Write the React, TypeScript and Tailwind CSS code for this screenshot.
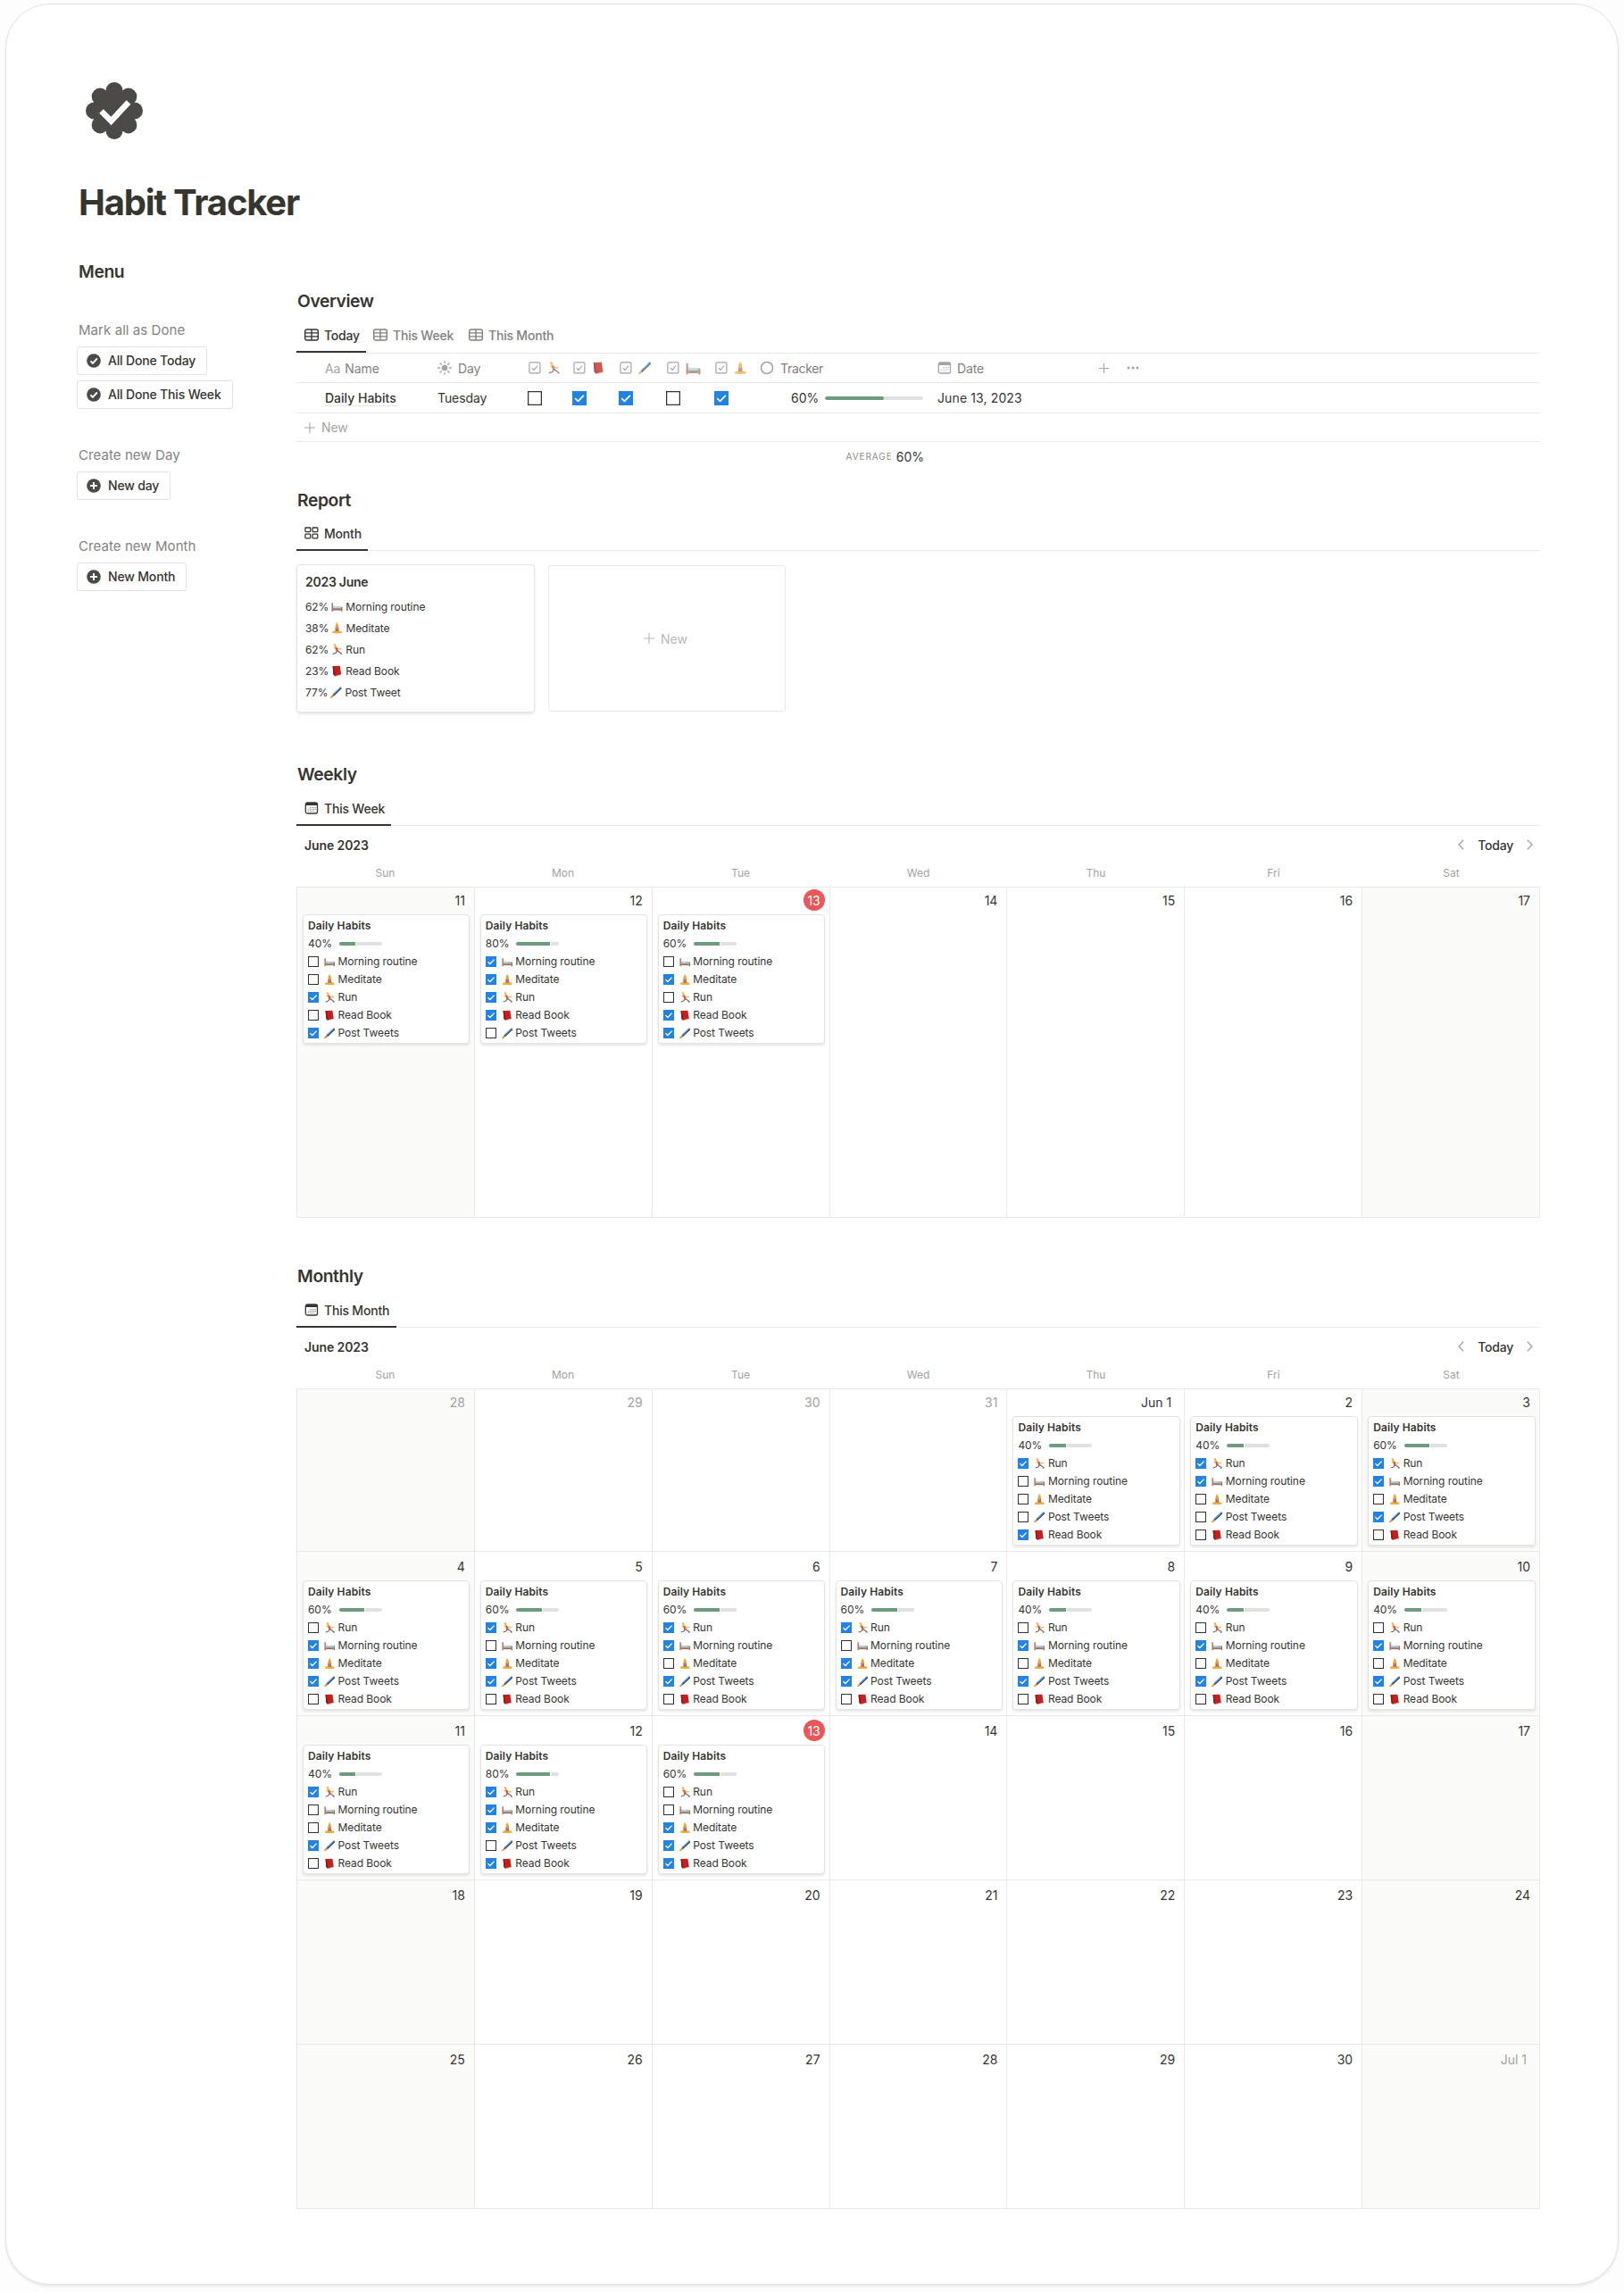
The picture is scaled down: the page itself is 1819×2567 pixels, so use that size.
import React from "react";

type Habit = "run" | "bed" | "yoga" | "pen" | "book";

const LABELS: Record<Habit, string> = {
  run: "Run",
  bed: "Morning routine",
  yoga: "Meditate",
  pen: "Post Tweets",
  book: "Read Book",
};

function HabitIcon({ kind, className }: { kind: Habit; className: string }) {
  return (
    <svg viewBox="0 0 16 16" className={className} fill="none">
      {kind === "run" && (
        <g strokeLinecap="round" strokeLinejoin="round">
          <path d="M8.800 9.800l2.400 1.600 2.800 2.400" stroke="#4d6f86" strokeWidth="1.500" />
          <path d="M7.600 10L6.600 12.600l-4 1.400" stroke="#7d6353" strokeWidth="1.400" />
          <path d="M6.800 6.400L3.800 5.600M9 6.600l2.800 1.200 1.800-1.400" stroke="#eeb14a" strokeWidth="1.400" />
          <path d="M6.900 6l1.300 3.600" stroke="#dd4f33" strokeWidth="2.800" />
          <path d="M4.800 1.400l1.200 2.400" stroke="#eeb14a" strokeWidth="2.600" />
          <path d="M13.200 14.800l1.600-.8" stroke="#d8703d" strokeWidth="1" />
        </g>
      )}
      {kind === "bed" && (
        <g>
          <path d="M2.400 8h11.200v4.400H2.400z" fill="#7f9ba6" />
          <path d="M2.400 7.200q2-1 3.800.4l7.400 1.200v1H2.400z" fill="#c9d3d3" />
          <path d="M2.400 11.800h11.400V13H2.400z" fill="#a5583d" />
          <path d="M.6 2.800h1.800v11.600H.6z" fill="#b5694a" />
          <path d="M13.600 8.200h1.800v6.200h-1.800z" fill="#b5694a" />
        </g>
      )}
      {kind === "yoga" && (
        <g>
          <path d="M1 14.600q-.3-2.400 3-2.700l4-.9 4 .9q3.300.3 3 2.700-2.600.8-7 .8t-7-.8z" fill="#eeb03c" />
          <path d="M6.800.6h2l1.800 7.800-1.300 3.200H6.500L5.200 8.400z" fill="#f0b84a" />
          <circle cx="8" cy="4.800" r="1.900" fill="#e6a23c" />
          <path d="M6 7.400q2-1.200 4 0l.6 5H5.400z" fill="#b86a66" />
          <path d="M7.200 7h1.600L8 9.800z" fill="#eeb14a" />
        </g>
      )}
      {kind === "pen" && (
        <g strokeLinecap="round">
          <path d="M1.300 14.900l3.400-4.200" stroke="#dd9038" strokeWidth="2.200" />
          <path d="M5.200 10.200L14 1.800" stroke="#3f83cf" strokeWidth="2.600" />
          <path d="M4.600 12.400L14.800 2.600" stroke="#3b444d" strokeWidth="1.400" />
          <path d="M5.800 8.800l6-6" stroke="#93c2ec" strokeWidth="1" />
        </g>
      )}
      {kind === "book" && (
        <g>
          <path d="M2 1.200L12 .8l1.800 12.400-8.400 2.200L3 12.800z" fill="#c4201f" />
          <path d="M2 1.200l1.800.6 1.900 13.400L3 12.800z" fill="#8c1a18" />
          <path d="M5.500 14.700l8.200-2.100.1.800-8 2.300z" fill="#e9ddd6" />
        </g>
      )}
    </svg>
  );
}

function Check({ on, large }: { on: boolean; large?: boolean }) {
  const size = large ? "size-4" : "size-3";
  return (
    <svg viewBox="0 0 16 16" className={`${size} shrink-0`}>
      {on ? (
        <>
          <rect width="16" height="16" fill="#2383e2" />
          <path d="M3.200 8.200l3.300 3.200 6.300-6.600" fill="none" stroke="#fff" strokeWidth="1.700" />
        </>
      ) : (
        <rect x={large ? 0.6 : 0.7} y={large ? 0.6 : 0.7} width={large ? 14.8 : 14.6} height={large ? 14.8 : 14.6} fill="#fff" stroke="#37352f" strokeWidth={large ? 1.3 : 1.4} />
      )}
    </svg>
  );
}

function TableIcon() {
  return (
    <svg viewBox="0 0 16 14" className="h-3.5 w-4" fill="none" stroke="currentColor" strokeWidth="1.400">
      <rect x=".7" y="1" width="14.600" height="12" rx="2" />
      <path d="M.7 4.900h14.600M.7 8.900h14.600M8 1v12" />
    </svg>
  );
}

function GalleryIcon() {
  return (
    <svg viewBox="0 0 16 14" className="h-3.5 w-4" fill="none" stroke="currentColor" strokeWidth="1.300">
      <rect x=".9" y="1" width="5.800" height="4.600" rx=".8" />
      <rect x="9" y="1" width="5.800" height="4.600" rx=".8" />
      <rect x=".9" y="8.200" width="5.800" height="4.600" rx=".8" />
      <rect x="9" y="8.200" width="5.800" height="4.600" rx=".8" />
    </svg>
  );
}

function CalendarIcon() {
  return (
    <svg viewBox="0 0 16 14" className="h-3.5 w-4" fill="none">
      <rect x="1.300" y="1" width="13.200" height="12" rx="2" stroke="currentColor" strokeWidth="1.300" />
      <path d="M1.300 3a2 2 0 0 1 2-2h9.200a2 2 0 0 1 2 2v1H1.300z" fill="currentColor" />
      <path d="M6.300 6v5M8.400 6v5M10.500 6v5M12.300 6v3M4.300 8.200V11" stroke="currentColor" strokeWidth="1" strokeDasharray="1.100 .8" opacity=".65" />
    </svg>
  );
}

function HeaderCheck() {
  return (
    <svg viewBox="0 0 14 14" className="size-3.5 shrink-0" fill="none" stroke="#a5a4a1">
      <rect x=".9" y=".9" width="12" height="12" rx="1.500" strokeWidth="1.200" />
      <path d="M4 7.200l2 2.300 4-5" strokeWidth="1.200" />
    </svg>
  );
}

function Plus({ className }: { className: string }) {
  return (
    <svg viewBox="0 0 12 12" className={className} stroke="currentColor" strokeWidth="1.100">
      <path d="M6 0v12M0 6h12" />
    </svg>
  );
}

function Chevron({ flip }: { flip?: boolean }) {
  return (
    <svg viewBox="0 0 7 12" className="h-3 w-[7px]" fill="none" stroke="#a3a29f" strokeWidth="1.300">
      <path d={flip ? "M.8.8L6 6 .8 11.200" : "M6.200.8L1 6l5.200 5.200"} />
    </svg>
  );
}

function MenuButton({ icon, label, className }: { icon: "check" | "plus"; label: string; className: string }) {
  return (
    <button className={`flex h-8 items-center rounded-[3px] border border-[#e2e2e0] pb-px pl-2.5 text-[14px] font-medium tracking-[-0.17px] whitespace-nowrap ${className}`}>
      <svg viewBox="0 0 16 16" className="mr-2 size-4 shrink-0">
        <circle cx="8" cy="8" r="7.800" fill="#4b4a46" />
        {icon === "check" ? (
          <path d="M4.400 8.300l2.500 2.500 4.900-5.300" fill="none" stroke="#fff" strokeWidth="1.900" />
        ) : (
          <path d="M8 4v8M4 8h8" stroke="#fff" strokeWidth="2" />
        )}
      </svg>
      {label}
    </button>
  );
}

function Heading({ children }: { children: React.ReactNode }) {
  return <h2 className="h-7 pl-px text-[19.300px] leading-7 font-semibold tracking-[-0.4px]">{children}</h2>;
}

function Tab({ icon, label, active, className }: { icon: React.ReactNode; label: string; active?: boolean; className: string }) {
  return (
    <div className={`flex h-full items-start ${active ? "border-b-2 border-[#37352f]" : "text-[#82817d]"} ${className}`}>
      <div className="flex h-6 items-center gap-[6px] text-[14px] font-medium tracking-[-0.2px] whitespace-nowrap">
        {icon}
        {label}
      </div>
    </div>
  );
}

function TabBar({ children, inset }: { children: React.ReactNode; inset?: boolean }) {
  return (
    <div className="h-[39px] border-b border-[#e9e9e7]">
      <div className={`flex ${inset ? "h-[38px] *:pt-[6px]" : "h-[39px] *:pt-[7px]"}`}>{children}</div>
    </div>
  );
}

function HabitCard({ pct, order, checks }: { pct: number; order: Habit[]; checks: string }) {
  return (
    <div className="mr-[4.500px] ml-[6px] h-[145px] rounded-[4px] border border-[#e3e3e1] bg-white pt-[2px] pl-[5px] text-[12px] leading-5 tracking-[-0.07px] shadow-[0_2px_3px_rgba(15,15,15,0.10)]">
      <div className="font-semibold tracking-[0.1px]">Daily Habits</div>
      <div className="flex items-center">
        <span className="w-[34.500px]">{pct}%</span>
        <div className="flex h-1 w-12 overflow-hidden rounded-full bg-[#e1e1df]">
          <div className="h-1 border-r border-white bg-[#6c9b7d]" style={{ width: `${pct + 1.5}%` }} />
        </div>
      </div>
      {order.map((h, i) => (
        <div key={h} className="flex items-center">
          <Check on={checks[i] === "1"} />
          <HabitIcon kind={h} className="mr-[3px] ml-[6px] size-[12.500px]" />
          <span>{LABELS[h]}</span>
        </div>
      ))}
    </div>
  );
}

interface Day {
  label: string;
  muted?: boolean;
  today?: boolean;
  pct?: number;
  checks?: string;
}

function DayCell({ day, index, order, className }: { day: Day; index: number; order: Habit[]; className: string }) {
  const weekend = index === 0 || index === 6;
  return (
    <div className={`border-r border-b border-[#e9e9e7] ${weekend ? "bg-[#fbfbf9]" : ""} ${className}`}>
      <div className="mb-[4px] flex h-6 items-center justify-end text-[14px]">
        {day.today ? (
          <span className="mr-[5px] flex size-6 items-center justify-center rounded-full bg-[#eb5757] text-white">{day.label}</span>
        ) : (
          <span className={`${day.label.includes(" ") ? "mr-[14px]" : "mr-[10px]"} ${day.muted ? "text-[#a3a29f]" : ""}`}>{day.label}</span>
        )}
      </div>
      {day.checks && <HabitCard pct={day.pct ?? 0} order={order} checks={day.checks} />}
    </div>
  );
}

function CalendarHead() {
  return (
    <>
      <div className="flex h-[43px] items-center justify-between pr-[8px] pb-px pl-[9px] text-[14px]">
        <span className="font-semibold tracking-[-0.1px]">June 2023</span>
        <div className="flex items-center gap-[15px] font-medium tracking-[-0.25px]">
          <Chevron />
          <span>Today</span>
          <Chevron flip />
        </div>
      </div>
      <div className="grid h-[25px] grid-cols-7 text-center text-[12px] leading-[20px] text-[#a3a29f]">
        {["Sun", "Mon", "Tue", "Wed", "Thu", "Fri", "Sat"].map((d) => (
          <span key={d}>{d}</span>
        ))}
      </div>
    </>
  );
}

const WEEK_ORDER: Habit[] = ["bed", "yoga", "run", "book", "pen"];
const MONTH_ORDER: Habit[] = ["run", "bed", "yoga", "pen", "book"];

const WEEK: Day[] = [
  { label: "11", pct: 40, checks: "00101" },
  { label: "12", pct: 80, checks: "11110" },
  { label: "13", today: true, pct: 60, checks: "01011" },
  { label: "14" },
  { label: "15" },
  { label: "16" },
  { label: "17" },
];

const MONTH: Day[][] = [
  [
    { label: "28", muted: true },
    { label: "29", muted: true },
    { label: "30", muted: true },
    { label: "31", muted: true },
    { label: "Jun 1", pct: 40, checks: "10001" },
    { label: "2", pct: 40, checks: "11000" },
    { label: "3", pct: 60, checks: "11010" },
  ],
  [
    { label: "4", pct: 60, checks: "01110" },
    { label: "5", pct: 60, checks: "10110" },
    { label: "6", pct: 60, checks: "11010" },
    { label: "7", pct: 60, checks: "10110" },
    { label: "8", pct: 40, checks: "01010" },
    { label: "9", pct: 40, checks: "01010" },
    { label: "10", pct: 40, checks: "01010" },
  ],
  [
    { label: "11", pct: 40, checks: "10010" },
    { label: "12", pct: 80, checks: "11101" },
    { label: "13", today: true, pct: 60, checks: "00111" },
    { label: "14" },
    { label: "15" },
    { label: "16" },
    { label: "17" },
  ],
  ["18", "19", "20", "21", "22", "23", "24"].map((label) => ({ label })),
  [...["25", "26", "27", "28", "29", "30"].map((label) => ({ label })), { label: "Jul 1", muted: true }],
];

const REPORT: [string, Habit, string][] = [
  ["62%", "bed", "Morning routine"],
  ["38%", "yoga", "Meditate"],
  ["62%", "run", "Run"],
  ["23%", "book", "Read Book"],
  ["77%", "pen", "Post Tweet"],
];

const TABLE_HABITS: { kind: Habit; on: boolean; width: string }[] = [
  { kind: "run", on: false, width: "w-[50px]" },
  { kind: "book", on: true, width: "w-[52px]" },
  { kind: "pen", on: true, width: "w-[53.500px]" },
  { kind: "bed", on: false, width: "w-[54px]" },
  { kind: "yoga", on: true, width: "w-[50px]" },
];

function Sidebar() {
  return (
    <aside className="w-[246px] shrink-0 pt-[285px]">
      <div className="ml-[1px]">
        <Heading>Menu</Heading>
      </div>
      <p className="mt-[39.500px] mb-[6.500px] ml-[2px] h-6 text-[15px] leading-6 tracking-[0.07px] text-[#85847f]">Mark all as Done</p>
      <MenuButton icon="check" label="All Done Today" className="w-[146px]" />
      <MenuButton icon="check" label="All Done This Week" className="mt-1.5 w-[175px]" />
      <p className="mt-[40px] mb-[6px] ml-[2px] h-6 text-[15px] leading-6 tracking-[0.07px] text-[#85847f]">Create new Day</p>
      <MenuButton icon="plus" label="New day" className="w-[105px]" />
      <p className="mt-[40px] mb-[6px] ml-[2px] h-6 text-[15px] leading-6 tracking-[0.07px] text-[#85847f]">Create new Month</p>
      <MenuButton icon="plus" label="New Month" className="w-[123px]" />
    </aside>
  );
}

function Overview() {
  return (
    <section>
      <Heading>Overview</Heading>
      <div className="h-[6px]" />
      <TabBar inset>
        <Tab icon={<TableIcon />} label="Today" active className="w-[78px] pl-[9px]" />
        <Tab icon={<TableIcon />} label="This Week" className="w-[106px] pl-2" />
        <Tab icon={<TableIcon />} label="This Month" className="pl-[9px]" />
      </TabBar>
      <div className="flex h-[33px] items-center border-b border-[#e9e9e7] pl-8 text-[14px] tracking-[-0.1px] text-[#82817d]">
        <div className="w-[126px]">
          <span className="mr-[5px] text-[#a5a4a1]">Aa</span>Name
        </div>
        <div className="flex w-[101.500px] items-center gap-[7px]">
          <svg viewBox="0 0 16 16" className="size-4" stroke="#a5a4a1" strokeWidth="1.300" strokeLinecap="round">
            <circle cx="8" cy="8" r="3.300" fill="#a5a4a1" stroke="none" />
            <path d="M8 .7v2M8 13.300v2M.7 8h2M13.300 8h2M2.800 2.800l1.400 1.400M11.800 11.800l1.400 1.400M2.800 13.200l1.400-1.400M11.800 4.200l1.400-1.400" />
          </svg>
          Day
        </div>
        {TABLE_HABITS.map((h) => (
          <div key={h.kind} className={`flex items-center gap-[7px] ${h.width}`}>
            <HeaderCheck />
            <HabitIcon kind={h.kind} className={`opacity-75 ${h.kind === "bed" ? "size-[17px]" : "size-[14.500px]"}`} />
          </div>
        ))}
        <div className="flex w-[199px] items-center gap-[7px] tracking-[-0.3px]">
          <svg viewBox="0 0 16 16" className="size-4" fill="none">
            <circle cx="8" cy="8" r="6.500" stroke="#a5a4a1" strokeWidth="1.600" />
          </svg>
          Tracker
        </div>
        <div className="flex w-[181px] items-center gap-[6px]">
          <span className="text-[#a5a4a1]">
            <CalendarIcon />
          </span>
          Date
        </div>
        <Plus className="size-[11px] text-[#a5a4a1]" />
        <svg viewBox="0 0 14 4" className="ml-5 h-1 w-3.5 fill-[#a5a4a1]">
          <circle cx="2" cy="2" r="1.500" />
          <circle cx="7" cy="2" r="1.500" />
          <circle cx="12" cy="2" r="1.500" />
        </svg>
      </div>
      <div className="flex h-[34px] items-center border-b border-[#e9e9e7] pl-8 text-[14px]">
        <div className="w-[126px]">
          <span className="border-b border-dotted border-[#d6d6d3] font-medium">Daily Habits</span>
        </div>
        <div className="w-[100.500px] tracking-[-0.1px]">Tuesday</div>
        {TABLE_HABITS.map((h) => (
          <div key={h.kind} className={h.width}>
            <Check on={h.on} large />
          </div>
        ))}
        <div className="flex w-[200px] items-center pl-[36px]">
          <span className="w-[38px]">60%</span>
          <div className="h-1 w-[110px] overflow-hidden rounded-full bg-[#e1e1df]">
            <div className="h-1 w-3/5 rounded-full bg-[#6c9b7d]" />
          </div>
        </div>
        <span className="tracking-[0.12px]">June 13, 2023</span>
      </div>
      <div className="flex h-8 items-center gap-[7px] border-b border-[#e9e9e7] pl-[9px] text-[14px] tracking-[-0.1px] text-[#a5a4a1]">
        <Plus className="size-3" />
        New
      </div>
      <div className="flex h-[33px] w-[703px] items-center justify-end gap-[4px]">
        <span className="text-[10px] tracking-[0.95px] text-[#8f8e8a]">AVERAGE</span>
        <span className="text-[14px]">60%</span>
      </div>
    </section>
  );
}

function Report() {
  return (
    <section className="pt-[18px]">
      <Heading>Report</Heading>
      <div className="h-[4px]" />
      <TabBar>
        <Tab icon={<GalleryIcon />} label="Month" active className="w-[80px] pl-[9px]" />
      </TabBar>
      <div className="flex gap-[15px] pt-[15px]">
        <div className="h-[166px] w-[267px] rounded-[4px] border border-[#e3e3e1] pt-[7px] pl-[9px] text-[12px] leading-6 tracking-[-0.07px] shadow-[0_2px_3px_rgba(15,15,15,0.10)]">
          <div className="mb-[4.500px] text-[14px] leading-[23px] font-semibold tracking-[-0.25px]">2023 June</div>
          {REPORT.map(([pct, kind, label]) => (
            <div key={kind} className="flex items-center">
              {pct}
              <HabitIcon kind={kind} className="mx-[3px] size-[13px]" />
              {label}
            </div>
          ))}
        </div>
        <div className="mt-px flex h-[164px] w-[266px] items-center justify-center gap-[7px] rounded-[3px] border border-[#e9e9e7] pr-[3px] text-[14px] text-[#b9b8b6]">
          <Plus className="size-3" />
          New
        </div>
      </div>
    </section>
  );
}

export default function App() {
  return (
    <div className="h-[2567px] w-[1819px] bg-[#fdfdfd] pt-1 pl-1.5 font-['Inter','Liberation_Sans',sans-serif] text-[#37352f]">
      <div className="flex h-[2555px] w-[1807px] rounded-[50px] border border-[#e2e2e2] bg-white pl-[79px] shadow-[0_2px_3px_rgba(0,0,0,0.08)]">
        <div className="flex w-[1640px] flex-col">
          <div className="h-0">
            <svg viewBox="0 0 64 64" className="mt-[87px] ml-[10px] size-16">
              <g fill="#4b4a46">
                <circle cx="32" cy="32" r="23" />
                <circle cx="32" cy="9.500" r="9.500" />
                <circle cx="47.900" cy="16.100" r="9.500" />
                <circle cx="54.500" cy="32" r="9.500" />
                <circle cx="47.900" cy="47.900" r="9.500" />
                <circle cx="32" cy="54.500" r="9.500" />
                <circle cx="16.100" cy="47.900" r="9.500" />
                <circle cx="9.500" cy="32" r="9.500" />
                <circle cx="16.100" cy="16.100" r="9.500" />
              </g>
              <path d="M17.500 32.500L28.500 43.500L48 22.500" fill="none" stroke="#fff" strokeWidth="6.500" />
            </svg>
            <h1 className="mt-[47px] ml-[2px] h-12 text-[40px] leading-[48px] font-bold tracking-[-1.200px] whitespace-nowrap">Habit Tracker</h1>
          </div>
          <div className="flex">
            <Sidebar />
            <main className="w-[1393px] shrink-0 pt-[318px]">
              <Overview />
              <Report />
              <section className="pt-[55px]">
                <Heading>Weekly</Heading>
                <div className="h-[5px]" />
                <TabBar>
                  <Tab icon={<CalendarIcon />} label="This Week" active className="w-[106px] pl-[9px]" />
                </TabBar>
                <CalendarHead />
                <div className="grid grid-cols-7 border-t border-l border-[#e9e9e7]">
                  {WEEK.map((d, i) => (
                    <DayCell key={d.label} day={d} index={i} order={WEEK_ORDER} className="h-[370px] pt-[2px]" />
                  ))}
                </div>
              </section>
              <section className="pt-[51px]">
                <Heading>Monthly</Heading>
                <div className="h-[5px]" />
                <TabBar>
                  <Tab icon={<CalendarIcon />} label="This Month" active className="w-[112px] pl-[9px]" />
                </TabBar>
                <CalendarHead />
                <div className="border-t border-l border-[#e9e9e7]">
                  {MONTH.map((week, r) => (
                    <div key={r} className="grid grid-cols-7">
                      {week.map((d, i) => (
                        <DayCell key={d.label} day={d} index={i} order={MONTH_ORDER} className={r === 0 ? "h-[182px] pt-[2px]" : "h-[184px] pt-[4px]"} />
                      ))}
                    </div>
                  ))}
                </div>
              </section>
            </main>
          </div>
        </div>
      </div>
    </div>
  );
}
